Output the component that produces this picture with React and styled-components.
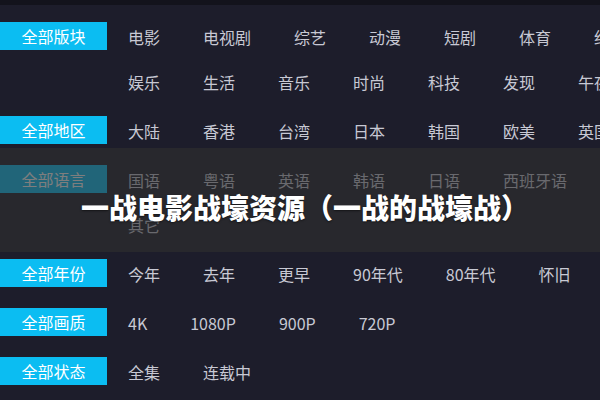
import styled, { createGlobalStyle } from "styled-components";

const GlobalStyle = createGlobalStyle`
  html, body {
    margin: 0;
    padding: 0;
    background: #1d1d2b;
    overflow: hidden;
  }

  body {
    font-family: "Noto Sans CJK SC", "Noto Sans", sans-serif;
  }
`;

const Page = styled.div`
  position: relative;
  width: 600px;
  height: 400px;
  overflow: hidden;
  background: #1d1d2b;
`;

const TopBar = styled.div`
  height: 5px;
  background: #13131c;
`;

const FilterList = styled.div`
  padding-top: 17px;
`;

const FilterRow = styled.div`
  display: flex;
  align-items: flex-start;
  margin-bottom: 21px;
`;

const Label = styled.div`
  flex-shrink: 0;
  width: 107px;
  height: 28px;
  line-height: 28px;
  text-align: center;
  background: #0bbdf2;
  color: #ffffff;
  font-size: 16px;
`;

const Items = styled.div`
  display: flex;
  flex-wrap: wrap;
  flex-shrink: 0;
  width: 507px;
  margin-left: 21px;
  column-gap: 43px;
  row-gap: 17px;
`;

const Item = styled.span`
  height: 28px;
  line-height: 30px;
  font-size: 16px;
  color: #c8c9d4;
  white-space: nowrap;
`;

const Banner = styled.div`
  position: absolute;
  left: 0;
  right: 0;
  top: 148px;
  height: 104px;
  display: flex;
  align-items: center;
  justify-content: center;
  background: rgba(46, 46, 46, 0.62);
`;

const Title = styled.h1`
  margin: 14px 0 0 10px;
  font-size: 28px;
  font-weight: 900;
  color: #ffffff;
  text-shadow: 0 1px 2px rgba(0, 0, 0, 0.5);
  white-space: nowrap;
`;

const filters = [
  {
    label: "全部版块",
    items: ["电影", "电视剧", "综艺", "动漫", "短剧", "体育", "纪录", "娱乐", "生活", "音乐", "时尚", "科技", "发现", "午夜"],
  },
  { label: "全部地区", items: ["大陆", "香港", "台湾", "日本", "韩国", "欧美", "英国"] },
  { label: "全部语言", items: ["国语", "粤语", "英语", "韩语", "日语", "西班牙语", "其它"] },
  { label: "全部年份", items: ["今年", "去年", "更早", "90年代", "80年代", "怀旧"] },
  { label: "全部画质", items: ["4K", "1080P", "900P", "720P"] },
  { label: "全部状态", items: ["全集", "连载中"] },
];

export default function App() {
  return (
    <Page>
      <GlobalStyle />
      <TopBar />
      <FilterList>
        {filters.map((f) => (
          <FilterRow key={f.label}>
            <Label>{f.label}</Label>
            <Items>
              {f.items.map((it) => (
                <Item key={it}>{it}</Item>
              ))}
            </Items>
          </FilterRow>
        ))}
      </FilterList>
      <Banner>
        <Title>一战电影战壕资源（一战的战壕战）</Title>
      </Banner>
    </Page>
  );
}
